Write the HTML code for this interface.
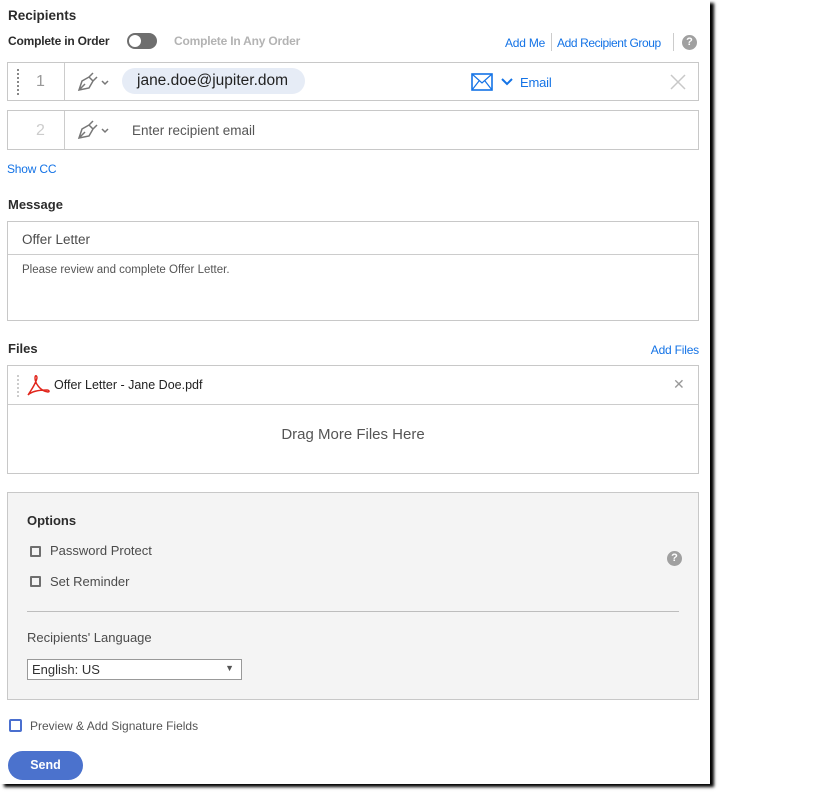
<!DOCTYPE html>
<html><head><style>
*{margin:0;padding:0;box-sizing:border-box}
body{width:830px;height:795px;background:#fff;position:relative;overflow:hidden;font-family:"Liberation Sans",sans-serif;color:#4b4b4b}
.pg{position:absolute;left:0;top:0;width:710px;height:784px;background:#fff;box-shadow:4px 3px 3px #000}
.a{position:absolute;white-space:nowrap}
.b{font-weight:bold;color:#2c2c2c;font-size:13px}
.box{position:absolute;border:1px solid #c8c8c8;background:#fff}
.lnk{color:#1473e6;font-size:12px;letter-spacing:-0.2px}
.cb{position:absolute;width:11px;height:11px;border:2px solid #6e6e6e;border-radius:1px}
</style></head><body>
<div class="pg">
<div class="a b" style="left:8px;top:8px;font-size:13.5px">Recipients</div>
<div class="a b" style="left:8px;top:34px;font-size:12px;letter-spacing:-0.2px">Complete in Order</div>
<div class="a" style="left:127px;top:33px;width:30px;height:16px;border-radius:8px;background:#6e6e6e"><div style="position:absolute;left:2px;top:2px;width:12px;height:12px;border-radius:6px;background:#fff"></div></div>
<div class="a" style="left:174px;top:34px;font-size:12px;font-weight:bold;color:#b3b3b3;letter-spacing:-0.2px">Complete In Any Order</div>
<div class="a lnk" style="left:505px;top:36px">Add Me</div>
<div class="a" style="left:551px;top:33px;width:1px;height:18px;background:#ccc"></div>
<div class="a lnk" style="left:557px;top:36px;letter-spacing:-0.4px">Add Recipient Group</div>
<div class="a" style="left:673px;top:33px;width:1px;height:18px;background:#ccc"></div>
<div class="a" style="left:682px;top:35px;width:15px;height:15px;border-radius:50%;background:#a0a0a0;color:#fff;font-size:11px;font-weight:bold;text-align:center;line-height:15px">?</div>

<div class="box" style="left:7px;top:62px;width:692px;height:39px">
 <div class="a" style="left:9px;top:6px;height:26px;border-left:2px dotted #888"></div>
 <div class="a" style="left:28px;top:10px;font-size:16px;color:#999">1</div>
 <div class="a" style="left:56px;top:0;width:1px;height:37px;background:#ccc"></div>
 <svg class="a" style="left:68px;top:8px" width="38" height="22" viewBox="0 0 38 22"><path d="M3 19 L6 10 L13 6 L17 10 L13 17 Z M3 19 L9 13 M13 6 L17 2 M17 10 L21 6" fill="none" stroke="#777" stroke-width="1.5"/><path d="M26 10 L29 13 L32 10" fill="none" stroke="#777" stroke-width="1.5"/></svg>
 <div class="a" style="left:114px;top:5px;width:183px;height:26px;border-radius:13px;background:#e6ecf6;font-size:15.5px;color:#222;padding:4px 0 0 15px">jane.doe@jupiter.dom</div>
 <svg class="a" style="left:463px;top:10px" width="22" height="18" viewBox="0 0 22 18"><rect x="1" y="1" width="20" height="16" fill="none" stroke="#1473e6" stroke-width="1.6"/><path d="M1 1 L11 10 L21 1 M1 17 L8 8 M21 17 L14 8" fill="none" stroke="#1473e6" stroke-width="1.2"/></svg>
 <svg class="a" style="left:493px;top:15px" width="12" height="8"><path d="M1 1 L6 6 L11 1" fill="none" stroke="#1473e6" stroke-width="2"/></svg>
 <div class="a lnk" style="left:512px;top:12px;font-size:13px">Email</div>
 <svg class="a" style="left:661px;top:10px" width="18" height="18"><path d="M2 2 L16 16 M16 2 L2 16" stroke="#c8c8c8" stroke-width="1.5"/></svg>
</div>
<div class="box" style="left:7px;top:110px;width:692px;height:40px">
 <div class="a" style="left:28px;top:11px;font-size:16px;color:#ccc">2</div>
 <div class="a" style="left:56px;top:0;width:1px;height:38px;background:#ccc"></div>
 <svg class="a" style="left:68px;top:8px" width="38" height="22" viewBox="0 0 38 22"><path d="M3 19 L6 10 L13 6 L17 10 L13 17 Z M3 19 L9 13 M13 6 L17 2 M17 10 L21 6" fill="none" stroke="#777" stroke-width="1.5"/><path d="M26 10 L29 13 L32 10" fill="none" stroke="#777" stroke-width="1.5"/></svg>
 <div class="a" style="left:124px;top:12px;font-size:13.5px;color:#555">Enter recipient email</div>
</div>
<div class="a lnk" style="left:7px;top:162px">Show CC</div>

<div class="a b" style="left:8px;top:197px">Message</div>
<div class="box" style="left:7px;top:221px;width:692px;height:100px">
 <div class="a" style="left:14px;top:10px;font-size:13.5px;color:#4b4b4b">Offer Letter</div>
 <div class="a" style="left:0;top:32px;width:690px;height:1px;background:#ccc"></div>
 <div class="a" style="left:14px;top:42px;font-size:11.5px;color:#555">Please review and complete Offer Letter.</div>
</div>

<div class="a b" style="left:8px;top:341px">Files</div>
<div class="a lnk" style="right:11px;top:343px">Add Files</div>
<div class="box" style="left:7px;top:365px;width:692px;height:109px">
 <div class="a" style="left:9px;top:9px;height:22px;border-left:2px dotted #ccc"></div>
 <svg class="a" style="left:18px;top:9px" width="24" height="22" viewBox="0 0 24 22"><path d="M2 20 C6 14 10 8 11 3 C11 0 9 0 9 3 C9 8 14 16 22 17 C24 17 23 15 21 15 C15 15 6 16 2 20 Z" fill="none" stroke="#e1251b" stroke-width="1.4"/></svg>
 <div class="a" style="left:46px;top:12px;font-size:12.5px;color:#222">Offer Letter - Jane Doe.pdf</div>
 <div class="a" style="left:665px;top:10px;font-size:14px;color:#999">✕</div>
 <div class="a" style="left:0;top:38px;width:690px;height:1px;background:#ccc"></div>
 <div class="a" style="left:0;top:60px;width:690px;text-align:center;font-size:15px;color:#555">Drag More Files Here</div>
</div>

<div class="box" style="left:7px;top:492px;width:692px;height:208px;background:#f4f4f4">
 <div class="a b" style="left:19px;top:20px;font-size:13px">Options</div>
 <div class="cb" style="left:22px;top:53px"></div>
 <div class="a" style="left:42px;top:50px;font-size:13px;color:#4b4b4b">Password Protect</div>
 <div class="cb" style="left:22px;top:83px"></div>
 <div class="a" style="left:42px;top:81px;font-size:13px;color:#4b4b4b">Set Reminder</div>
 <div class="a" style="left:659px;top:58px;width:15px;height:15px;border-radius:50%;background:#a0a0a0;color:#fff;font-size:11px;font-weight:bold;text-align:center;line-height:15px">?</div>
 <div class="a" style="left:19px;top:118px;width:652px;height:1px;background:#bdbdbd"></div>
 <div class="a" style="left:19px;top:137px;font-size:13px;color:#4b4b4b">Recipients' Language</div>
 <div class="a" style="left:19px;top:166px;width:215px;height:21px;border:1px solid #999;background:#fff;font-size:13px;color:#333;padding:2px 0 0 4px">English: US<span style="position:absolute;right:7px;top:3px;font-size:9px;color:#555">▼</span></div>
</div>

<div class="a" style="left:9px;top:719px;width:13px;height:13px;border:2px solid #4a6fcf;border-radius:2px"></div>
<div class="a" style="left:30px;top:719px;font-size:12px;color:#555">Preview &amp; Add Signature Fields</div>
<div class="a" style="left:8px;top:751px;width:75px;height:29px;border-radius:15px;background:#4b72cd;color:#fff;font-weight:bold;font-size:12.5px;text-align:center;line-height:29px">Send</div>
</div>
</body></html>
